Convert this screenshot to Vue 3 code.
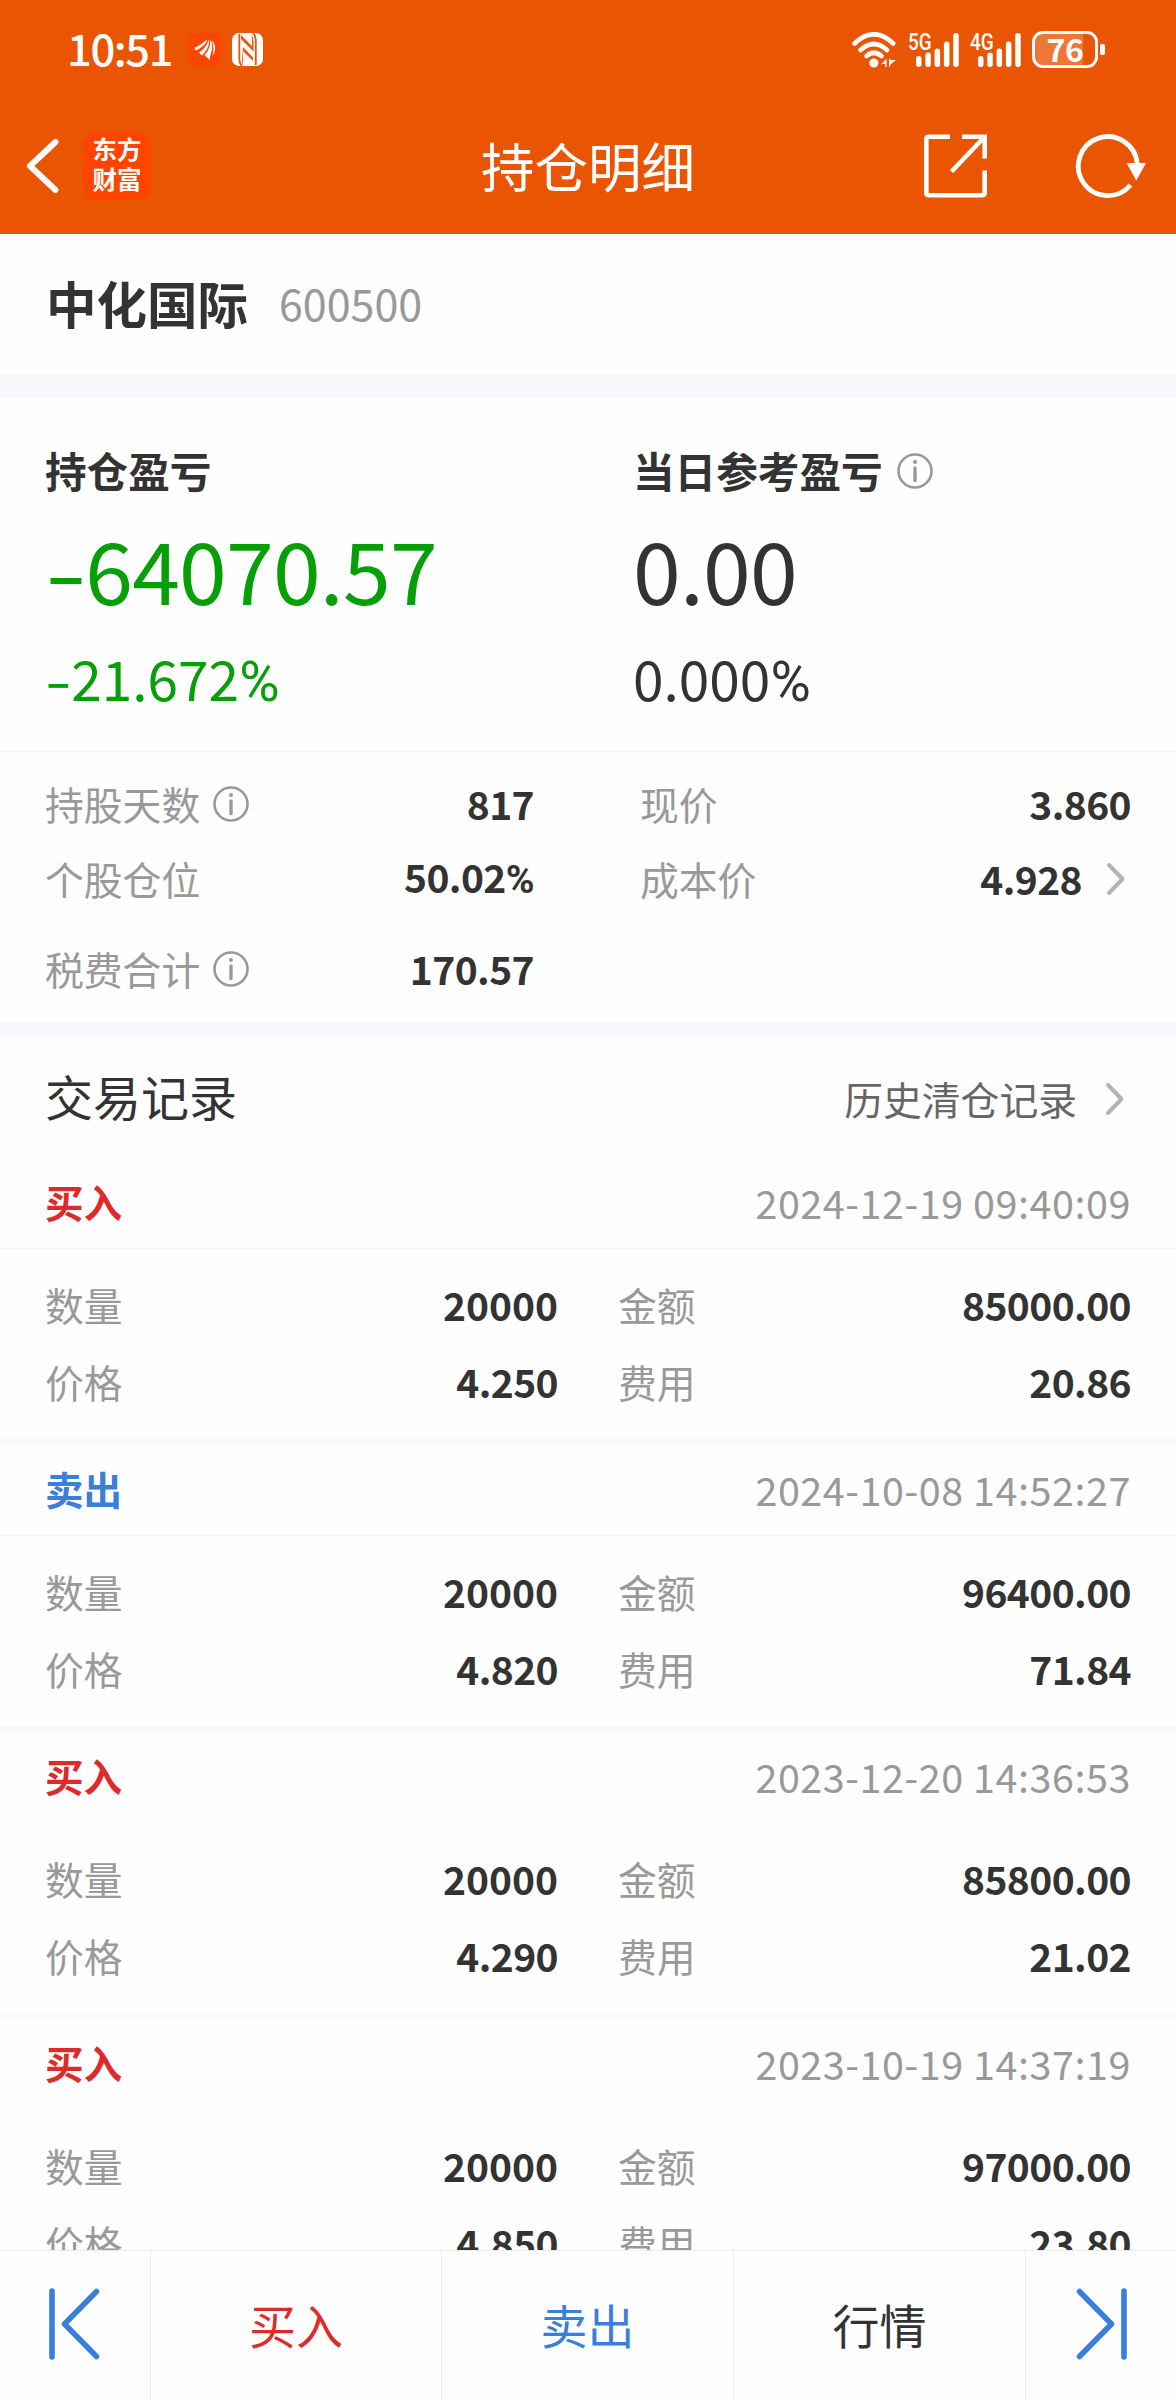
<script setup>
import { ref } from 'vue'

const stock = { name: '中化国际', code: '600500' }

const signals = ['5G', '4G']

const bars = [
  { x: 8, y: 23 },
  { x: 17.3, y: 19.5 },
  { x: 26.6, y: 15.5 },
  { x: 35.9, y: 8.5 },
  { x: 45.2, y: 0 }
]

const records = ref([
  { type: 'buy', time: '2024-12-19 09:40:09', count: '20000', amount: '85000.00', price: '4.250', fee: '20.86' },
  { type: 'sell', time: '2024-10-08 14:52:27', count: '20000', amount: '96400.00', price: '4.820', fee: '71.84' },
  { type: 'buy', time: '2023-12-20 14:36:53', count: '20000', amount: '85800.00', price: '4.290', fee: '21.02' },
  { type: 'buy', time: '2023-10-19 14:37:19', count: '20000', amount: '97000.00', price: '4.850', fee: '23.80' }
])

const typeName = { buy: '买入', sell: '卖出' }
</script>

<template>
  <div class="page">
    <header class="header">
      <!-- Status bar -->
      <div class="status-bar">
        <span class="clock">10:51</span>
        <svg class="app-badge" width="33" height="33" viewBox="0 0 33 33">
          <rect width="33" height="33" rx="8" fill="#ff4400" />
          <g fill="#fff">
            <path d="M6.500 14.500C11 13.500 14 10 19.500 6.500C18 11 13 15.500 7.500 17.500Z" />
            <path d="M11 19.500C16 16.500 19 12 20.800 6.500C22 12 18.500 18.500 13.500 22.500Z" />
            <path d="M16.500 22C21 17.500 22.500 12 22.300 6.500C25 11 24.500 16.500 22.500 21.500L21.500 27Z" />
            <path d="M24 7.500C27 10 28 15 26.500 19L24.500 23C26 17 25.500 12 24 7.500Z" />
          </g>
        </svg>
        <svg class="nfc" width="31" height="33" viewBox="0 0 31 33">
          <rect width="31" height="33" rx="7" fill="#fff" />
          <g fill="none" stroke="#ea5504" stroke-width="1.800">
            <path d="M7.300 1V26Q7.300 30 10 33" />
            <path d="M23.800 32V7Q23.800 3 21 0" />
          </g>
          <path d="M11 14L21 24.500V28L11 18V31.500Q10 30 10 27ZM9 2L20 13V6.500Q20 3 19 1Q21.500 4 21.500 8V18.500L9 6Z" fill="#ea5504" />
        </svg>
        <div class="status-right">
          <svg class="wifi" width="45" height="36" viewBox="0 0 45 36">
            <g fill="none" stroke="#fff" stroke-width="4.600" stroke-linecap="round">
              <path d="M2.500 11.500Q21.800 -7 41.200 11.500" />
              <path d="M8.500 18Q21.800 6 35 18" />
              <path d="M14.500 24Q21.800 17.500 29.500 24" />
            </g>
            <circle cx="21.800" cy="31" r="4.600" fill="#fff" />
            <path d="M29.500 32L34.500 26.500V35H33V32ZM37 26.500V35.500L39 32L44 28H39.500Z" fill="#fff" />
          </svg>
          <div v-for="s in signals" :key="s" class="signal">
            <span class="net">{{ s }}</span>
            <svg width="51" height="34" viewBox="0 0 51 34">
              <rect v-for="b in bars" :key="b.x" :x="b.x" :y="b.y" width="5.500" :height="34 - b.y" rx="2.700" fill="#fff" />
            </svg>
          </div>
          <div class="battery">
            <div class="battery-body"><span>76</span></div>
            <div class="battery-cap"></div>
          </div>
        </div>
      </div>

      <!-- Nav bar -->
      <div class="nav-bar">
        <div class="nav-side">
          <svg class="back" width="34" height="56" viewBox="0 0 34 56">
            <path d="M29.500 4L4 28L29.500 52" fill="none" stroke="#fff" stroke-width="6" stroke-linecap="round" stroke-linejoin="round" />
          </svg>
          <div class="logo"><span>东方</span><span>财富</span></div>
        </div>
        <h1 class="title">持仓明细</h1>
        <div class="nav-side right">
          <svg class="share" width="64" height="64" viewBox="0 0 64 64">
            <g fill="none" stroke="#fff" stroke-width="4.600">
              <path d="M26 2.800H5Q2.300 2.800 2.300 5.500V58.500Q2.300 61.200 5 61.200H58Q60.700 61.200 60.700 58.500V36.500" />
              <path d="M38 2.800H60.700V24.500M60 3.500L27.500 37.500" />
            </g>
          </svg>
          <svg class="refresh" width="72" height="66" viewBox="0 0 72 66">
            <path d="M55.500 52A29.500 29.500 0 1 1 62.300 32" fill="none" stroke="#fff" stroke-width="4.800" />
            <path d="M51.500 30H71L61.300 47.500Z" fill="#fff" />
          </svg>
        </div>
      </div>
    </header>

    <section class="stock">
      <span class="stock-name">{{ stock.name }}</span>
      <span class="stock-code">{{ stock.code }}</span>
    </section>

    <!-- Profit -->
    <section class="profit">
      <div class="profit-col green">
        <div class="profit-label">持仓盈亏</div>
        <div class="profit-value"><span class="minus">-</span>64070.57</div>
        <div class="profit-rate"><span class="minus">-</span>21.672<span class="pct">%</span></div>
      </div>
      <div class="profit-col">
        <div class="profit-label">
          当日参考盈亏
          <svg class="info" viewBox="0 0 36 36">
            <circle cx="18" cy="18" r="16.500" />
            <path d="M18 15V27.500" />
            <circle class="dot" cx="18" cy="9" r="2" />
          </svg>
        </div>
        <div class="profit-value">0.00</div>
        <div class="profit-rate">0.000<span class="pct">%</span></div>
      </div>
    </section>

    <!-- Position details -->
    <section class="detail">
      <div class="detail-row">
        <div class="cell">
          <span class="label">持股天数</span>
          <svg class="info" viewBox="0 0 36 36">
            <circle cx="18" cy="18" r="16.500" />
            <path d="M18 15V27.500" />
            <circle class="dot" cx="18" cy="9" r="2" />
          </svg>
          <span class="value">817</span>
        </div>
        <div class="cell">
          <span class="label">现价</span>
          <span class="value">3.860</span>
        </div>
      </div>
      <div class="detail-row">
        <div class="cell">
          <span class="label">个股仓位</span>
          <span class="value">50.02<span class="pct">%</span></span>
        </div>
        <div class="cell">
          <span class="label">成本价</span>
          <span class="value">4.928</span>
          <svg class="arrow" viewBox="0 0 20 34">
            <path d="M3 3L16.500 17L3 31" />
          </svg>
        </div>
      </div>
      <div class="detail-row last">
        <div class="cell">
          <span class="label">税费合计</span>
          <svg class="info" viewBox="0 0 36 36">
            <circle cx="18" cy="18" r="16.500" />
            <path d="M18 15V27.500" />
            <circle class="dot" cx="18" cy="9" r="2" />
          </svg>
          <span class="value">170.57</span>
        </div>
        <div class="cell"></div>
      </div>
    </section>

    <!-- Trade records -->
    <section class="trades">
      <div class="trades-head">
        <span class="trades-title">交易记录</span>
        <span class="history">历史清仓记录</span>
        <svg class="arrow" viewBox="0 0 20 34">
          <path d="M3 3L16.500 17L3 31" />
        </svg>
      </div>
      <div v-for="r in records" :key="r.time" class="record">
        <div class="record-head">
          <span class="record-type" :class="r.type">{{ typeName[r.type] }}</span>
          <span class="record-time">{{ r.time }}</span>
        </div>
        <div class="record-body">
          <div class="record-row">
            <span class="label">数量</span>
            <span class="value count">{{ r.count }}</span>
            <span class="label second">金额</span>
            <span class="value">{{ r.amount }}</span>
          </div>
          <div class="record-row">
            <span class="label">价格</span>
            <span class="value">{{ r.price }}</span>
            <span class="label second">费用</span>
            <span class="value">{{ r.fee }}</span>
          </div>
        </div>
      </div>
    </section>

    <!-- Bottom bar -->
    <footer class="footer">
      <div class="tab">
        <svg width="52" height="72" viewBox="0 0 52 72">
          <path d="M3 3V69M47.500 3.500L15.500 36L47.500 68.500" />
        </svg>
      </div>
      <div class="tab buy">买入</div>
      <div class="tab sell">卖出</div>
      <div class="tab">行情</div>
      <div class="tab">
        <svg width="52" height="72" viewBox="0 0 52 72">
          <path d="M49 3V69M4.500 3.500L36.500 36L4.500 68.500" />
        </svg>
      </div>
    </footer>
  </div>
</template>

<style>
body {
  margin: 0;
}
</style>

<style scoped>
.page {
  display: flex;
  flex-direction: column;
  width: 1176px;
  height: 2400px;
  overflow: hidden;
  background: #fefefe;
  color: #333;
  font-family: 'Noto Sans CJK SC', sans-serif;
  line-height: 1;
}

svg {
  display: block;
  flex-shrink: 0;
}

/* Header */
.header {
  flex-shrink: 0;
  height: 234px;
  background: #ea5504;
  color: #fff;
}

.status-bar {
  display: flex;
  align-items: center;
  height: 99px;
  padding: 0 71px 0 67px;
}

.clock {
  width: 121px;
  padding-bottom: 4px;
  font-size: 43.5px;
  font-weight: 500;
  letter-spacing: -1.4px;
}

.nfc {
  margin-left: 11px;
}

.status-right {
  display: flex;
  align-items: center;
  margin-left: auto;
}

.wifi {
  margin-right: 11px;
}

.signal {
  position: relative;
  margin-right: 11px;
}

.net {
  position: absolute;
  left: 0;
  top: -3px;
  font-family: Roboto, sans-serif;
  font-size: 24px;
  font-weight: 500;
  transform: scaleX(0.79);
  transform-origin: left center;
}

.battery {
  display: flex;
  align-items: center;
}

.battery-body {
  box-sizing: border-box;
  width: 66px;
  height: 37px;
  border: 3px solid #fff;
  border-radius: 11px;
  background: linear-gradient(90deg, rgba(255, 255, 255, 0.2) 80%, transparent 80%);
  text-align: center;
  font-size: 32px;
  font-weight: 700;
  line-height: 28px;
  letter-spacing: -0.5px;
}

.battery-cap {
  width: 5px;
  height: 11px;
  margin-left: 2px;
  border-radius: 2px;
  background: #fff;
}

.nav-bar {
  display: flex;
  align-items: center;
  box-sizing: border-box;
  height: 135px;
  padding-bottom: 1px;
}

.nav-side {
  display: flex;
  align-items: center;
  flex: 1;
}

.nav-side.right {
  justify-content: flex-end;
}

.back {
  margin-left: 26px;
}

.logo {
  display: flex;
  flex-direction: column;
  align-items: center;
  gap: 5px;
  box-sizing: border-box;
  width: 68px;
  height: 68px;
  margin-left: 23px;
  padding-top: 5px;
  border-radius: 14px;
  background: #ff4400;
  font-size: 24.5px;
  font-weight: 700;
}

.title {
  margin: 0;
  padding-bottom: 3px;
  font-size: 53.5px;
  font-weight: 400;
}

.share {
  margin-right: 87px;
}

.refresh {
  margin-right: 29px;
}

/* Stock name */
.stock {
  display: flex;
  align-items: center;
  flex-shrink: 0;
  box-sizing: border-box;
  height: 164px;
  padding: 0 46px 4px;
  border-bottom: 24px solid #f6f8fb;
}

.stock-name {
  font-size: 50.5px;
  font-weight: 700;
}

.stock-code {
  margin-left: 31px;
  color: #999;
  font-size: 43px;
}

/* Profit */
.profit {
  display: flex;
  flex-shrink: 0;
  box-sizing: border-box;
  height: 354px;
  padding: 43px 0 0 45px;
  border-bottom: 1px solid #f5f5f6;
}

.profit-col {
  flex: 0 0 588px;
}

.profit-label {
  display: flex;
  align-items: center;
  height: 60px;
  font-size: 41.6px;
  font-weight: 700;
}

.profit-label .info {
  margin-left: 14px;
}

.profit-value {
  height: 100px;
  margin-top: 17px;
  font-size: 86px;
  line-height: 100px;
  letter-spacing: -0.8px;
}

.profit-rate {
  height: 60px;
  margin-top: 29px;
  font-size: 55px;
  line-height: 60px;
}

.green .profit-value,
.green .profit-rate {
  color: #079f07;
}

/* stretched so the sign is as wide as a dash */
.minus {
  display: inline-block;
  margin-right: 0.13em;
  transform: scaleX(1.4);
  transform-origin: left center;
}

.pct {
  font-family: Roboto, sans-serif;
}

.info {
  width: 36px;
  height: 36px;
  fill: none;
  stroke: #999;
  stroke-width: 2.6;
  stroke-linecap: round;
}

.info path {
  stroke-width: 3.4;
}

.info .dot {
  fill: #999;
  stroke: none;
}

.arrow {
  width: 20px;
  height: 34px;
  fill: none;
  stroke: #b3b3b3;
  stroke-width: 4;
  stroke-linecap: round;
  stroke-linejoin: round;
}

/* Details */
.detail {
  flex-shrink: 0;
  box-sizing: border-box;
  height: 285px;
  padding: 14px 45px 0;
  border-bottom: 15px solid #f6f8fb;
}

.detail-row {
  display: grid;
  grid-template-columns: 489px 1fr;
  column-gap: 106px;
  height: 75px;
}

.detail-row.last {
  margin-top: 15px;
}

.cell {
  display: flex;
  align-items: center;
}

.cell .info {
  margin-left: 13px;
}

.cell .arrow {
  margin: 0 5px 0 24px;
}

.label {
  color: #999;
  font-size: 38.8px;
}

.value {
  margin-left: auto;
  font-size: 39px;
  font-weight: 700;
  letter-spacing: -0.6px;
}

.value.count {
  letter-spacing: 0;
}

/* Trades */
.trades {
  flex: 1;
  min-height: 0;
  overflow: hidden;
}

.trades-head {
  display: flex;
  align-items: center;
  box-sizing: border-box;
  height: 121px;
  padding: 0 51px 0 45px;
  border-bottom: 1px solid #f5f5f6;
}

.trades-title {
  padding-bottom: 4px;
  font-size: 48px;
}

.history {
  margin: 2px 28px 0 auto;
  color: #666;
  font-size: 38.8px;
}

.trades-head .arrow {
  margin-top: 3px;
}

.record {
  border-bottom: 6px solid #f6f8fb;
}

.record-head {
  display: flex;
  justify-content: space-between;
  align-items: center;
  box-sizing: border-box;
  height: 91px;
  padding: 0 45px 3px;
  border-bottom: 1px solid #f5f5f6;
}

.record-type {
  font-size: 38.6px;
  font-weight: 700;
}

.buy {
  color: #dd2b2b;
}

.sell {
  color: #3a7fd9;
}

.record-time {
  color: #999;
  font-size: 39.5px;
  letter-spacing: 0.55px;
}

.record-body {
  padding: 17px 45px 19px;
}

.record-row {
  display: grid;
  grid-template-columns: 120px 393px 120px 1fr;
  align-items: center;
  height: 77px;
}

.record-row .second {
  margin-left: 60px;
  white-space: nowrap;
}

/* Footer */
.footer {
  display: grid;
  grid-template-columns: 150px 291px 292px 292px 151px;
  flex-shrink: 0;
  height: 149px;
  border-top: 1px solid #ebebeb;
}

.tab {
  display: flex;
  justify-content: center;
  align-items: center;
  box-sizing: border-box;
  padding-bottom: 4px;
  font-size: 47px;
}

.tab + .tab {
  border-left: 1px solid #ebebeb;
}

.tab svg {
  fill: none;
  stroke: #3a7fd9;
  stroke-width: 5.6;
  stroke-linecap: round;
  stroke-linejoin: round;
}
</style>
